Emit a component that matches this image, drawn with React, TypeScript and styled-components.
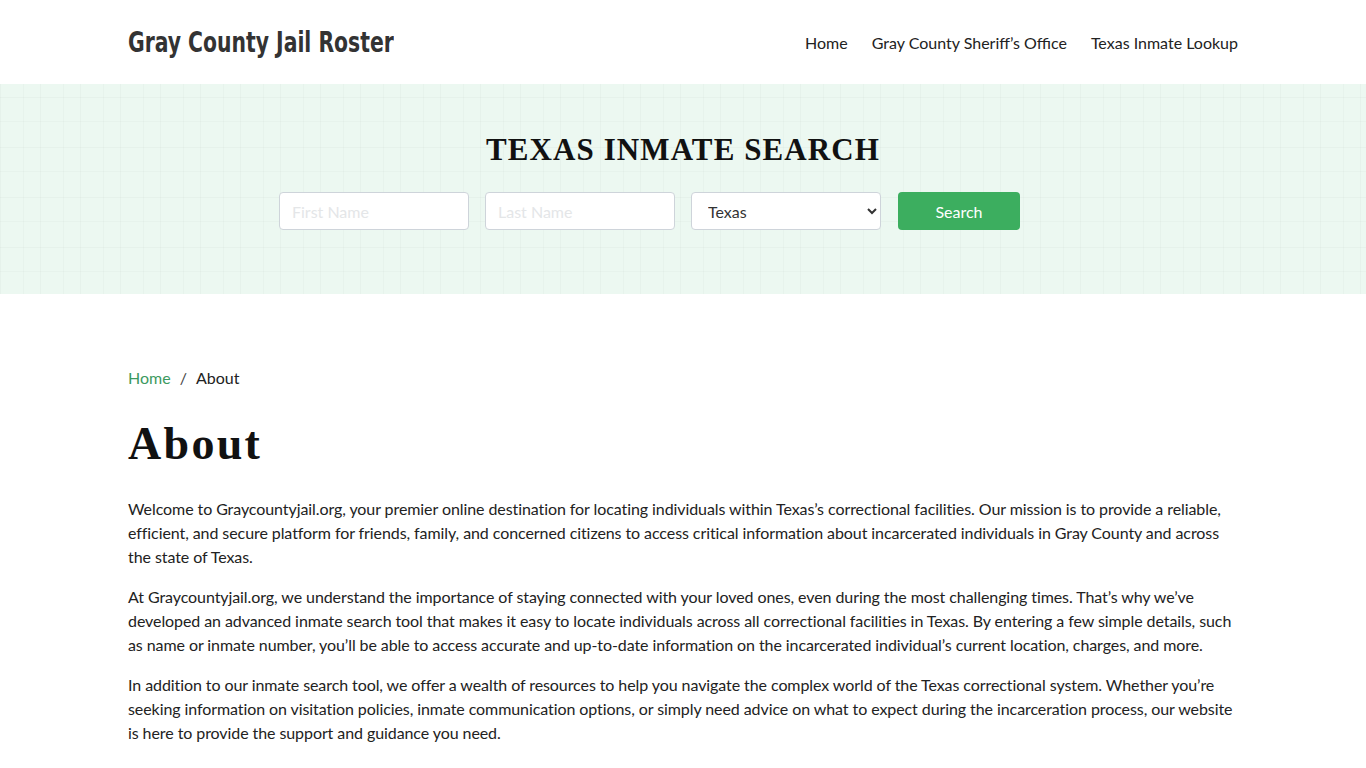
import React from "react";
import styled, { createGlobalStyle } from "styled-components";

const Global = createGlobalStyle`
  html, body { margin: 0; padding: 0; background: #fff; }
  body { font-family: Lato, "Open Sans", sans-serif; color: #222; }
  * { box-sizing: border-box; }
`;

const Container = styled.div`
  width: 1110px;
  margin: 0 auto;
`;

const Header = styled.header`
  height: 84px;
  background: #fff;
`;

const HeaderInner = styled(Container)`
  height: 100%;
  display: flex;
  align-items: center;
  justify-content: space-between;
`;

const BrandBox = styled.div`
  width: 264px;
  overflow: visible;
  white-space: nowrap;
`;

const Brand = styled.a`
  display: inline-block;
  font-family: "DejaVu Sans", sans-serif;
  font-stretch: condensed;
  font-weight: 700;
  font-size: 29px;
  letter-spacing: 0px;
  color: #333;
  text-decoration: none;
  transform: scaleX(0.78);
  transform-origin: left center;
`;

const Nav = styled.nav`
  display: flex;
  gap: 24px;
`;

const NavLink = styled.a`
  font-size: 16px;
  color: #222;
  text-decoration: none;
`;

const Hero = styled.section`
  height: 210px;
  background-color: #ecf8f1;
  background-image:
    linear-gradient(to right, rgba(0, 0, 0, 0.025) 1px, transparent 1px),
    linear-gradient(to bottom, rgba(0, 0, 0, 0.025) 1px, transparent 1px),
    linear-gradient(to right, rgba(0, 0, 0, 0.02) 1px, transparent 1px),
    linear-gradient(to bottom, rgba(0, 0, 0, 0.02) 1px, transparent 1px);
  background-size: 40px 50px, 40px 50px, 40px 50px, 40px 50px;
  background-position: 0 13px, 0 13px, 23px 37px, 23px 37px;
  display: flex;
  flex-direction: column;
  align-items: center;
  padding-top: 48px;
`;

const HeroTitle = styled.h2`
  margin: 0;
  font-family: "Liberation Serif", "DejaVu Serif", serif;
  font-weight: 700;
  font-size: 31px;
  line-height: 36px;
  letter-spacing: 1.1px;
  color: #111;
`;

const SearchForm = styled.form`
  display: flex;
  gap: 16px;
  margin-top: 24px;
  margin-right: 67px;
`;

const Field = styled.input`
  width: 190px;
  height: 38px;
  border: 1px solid #ced4da;
  border-radius: 4px;
  background: #fff;
  padding: 0 12px;
  font-family: Lato, sans-serif;
  font-size: 16px;
  color: #495057;
  &::placeholder { color: #e4e6e8; }
`;

const Select = styled.select`
  width: 190px;
  height: 38px;
  border: 1px solid #ced4da;
  border-radius: 4px;
  background: #fff;
  padding: 0 12px;
  font-family: Lato, sans-serif;
  font-size: 16px;
  color: #333;
`;

const Button = styled.button`
  width: 122px;
  height: 38px;
  border: none;
  border-radius: 4px;
  background: #3cae5f;
  color: #fff;
  font-family: Lato, sans-serif;
  font-size: 16px;
  margin-left: 1px;
`;

const Main = styled(Container)`
  padding-top: 74px;
`;

const Crumbs = styled.div`
  display: flex;
  gap: 9px;
  font-size: 16px;
  line-height: 20px;
`;

const CrumbLink = styled.a`
  color: #3c9a5f;
  text-decoration: none;
`;

const Sep = styled.span`
  color: #444;
`;

const Title = styled.h1`
  margin: 31px 0 28px;
  font-family: "Liberation Serif", "DejaVu Serif", serif;
  font-weight: 700;
  font-size: 46px;
  line-height: 50px;
  letter-spacing: 2.3px;
  color: #111;
`;

const Para = styled.p`
  margin: 0 0 16px;
  font-size: 16px;
  line-height: 24px;
  letter-spacing: -0.08px;
  color: #222;
`;

export default function App() {
  return (
    <>
      <Global />
      <Header>
        <HeaderInner>
          <BrandBox>
            <Brand href="#">Gray County Jail Roster</Brand>
          </BrandBox>
          <Nav>
            <NavLink href="#">Home</NavLink>
            <NavLink href="#">Gray County Sheriff’s Office</NavLink>
            <NavLink href="#">Texas Inmate Lookup</NavLink>
          </Nav>
        </HeaderInner>
      </Header>
      <Hero>
        <HeroTitle>TEXAS INMATE SEARCH</HeroTitle>
        <SearchForm onSubmit={(e) => e.preventDefault()}>
          <Field placeholder="First Name" />
          <Field placeholder="Last Name" />
          <Select defaultValue="Texas">
            <option>Texas</option>
          </Select>
          <Button type="submit">Search</Button>
        </SearchForm>
      </Hero>
      <Main>
        <Crumbs>
          <CrumbLink href="#">Home</CrumbLink>
          <Sep>/</Sep>
          <span>About</span>
        </Crumbs>
        <Title>About</Title>
        <Para>
          Welcome to Graycountyjail.org, your premier online destination for locating individuals within Texas’s correctional facilities. Our mission is to provide a reliable, efficient, and secure platform for friends, family, and concerned citizens to access critical information about incarcerated individuals in Gray County and across the state of Texas.
        </Para>
        <Para>
          At Graycountyjail.org, we understand the importance of staying connected with your loved ones, even during the most challenging times. That’s why we’ve developed an advanced inmate search tool that makes it easy to locate individuals across all correctional facilities in Texas. By entering a few simple details, such as name or inmate number, you’ll be able to access accurate and up-to-date information on the incarcerated individual’s current location, charges, and more.
        </Para>
        <Para>
          In addition to our inmate search tool, we offer a wealth of resources to help you navigate the complex world of the Texas correctional system. Whether you’re seeking information on visitation policies, inmate communication options, or simply need advice on what to expect during the incarceration process, our website is here to provide the support and guidance you need.
        </Para>
      </Main>
    </>
  );
}
